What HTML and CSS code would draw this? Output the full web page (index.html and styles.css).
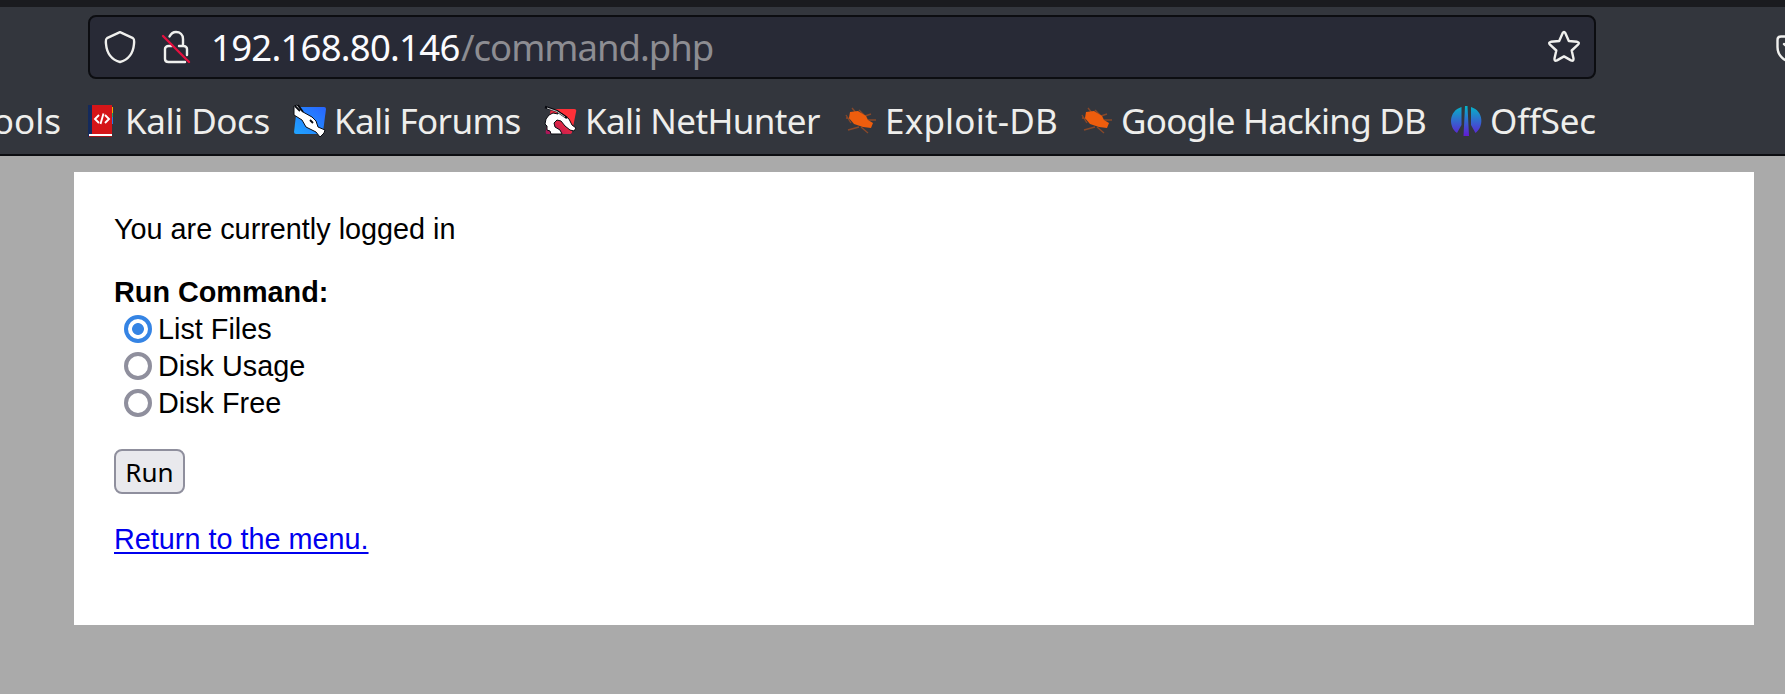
FILE: index.html
```html
<!DOCTYPE html>
<html lang="en">
<head>
<meta charset="utf-8">
<title>Command</title>
<link rel="stylesheet" href="styles.css">
</head>
<body>
<header class="browser">
  <div class="navbar">
    <div class="urlbar">
      <svg class="icon shield" viewBox="0 0 32 34"><path d="M16 2.2 29 8.2C30.5 9 30.3 11 30 14C29.3 22 25 29.500 16 32C7 29.500 2.700 22 2 14C1.700 11 1.500 9 3 8.200Z"/></svg>
      <svg class="icon lock" viewBox="0 0 32 34"><path d="M9.500 6.500C11 3.500 13 2 16 2C20 2 23 4.500 23 9V16M19 16H23.500C25.500 16 27 17.500 27 19V25M12 16H8.500C6.500 16 5 17.500 5 19V29C5 31 6.500 32 8.500 32H25"/><path class="slash" d="M3 6 29 32"/></svg>
      <span class="host">192.168.80.146</span><span class="path">/command.php</span>
      <svg class="icon star" viewBox="0 0 34 34"><path d="M15.600 3.200Q17 .8 18.400 3.200L21.800 11L30.200 11.800Q33 12.400 31 14.600L24.700 20.500L26.500 28.500Q26.800 31.500 24 30.400L17 26.400L10 30.400Q7.200 31.500 7.500 28.500L9.300 20.500L3 14.600Q1 12.400 3.800 11.800L12.200 11Z"/></svg>
    </div>
    <svg class="icon pocket" viewBox="0 0 34 30"><path d="M5 1.500H29Q32.500 1.500 32.500 5V12C32.500 21 25 27 17 27S1.500 21 1.500 12V5Q1.500 1.500 5 1.500ZM8 9 17 17 26 9"/></svg>
  </div>
  <nav class="bookmarks">
    <span class="tail">ools</span>
    <a class="mark docs"><svg viewBox="0 0 32 32"><path fill="#f5a800" d="M22 2h3v7h-3z"/><path fill="#20a465" d="M22 8h3v5h-3z"/><path fill="#2b78e4" d="M22 12h3v7h-3z"/><path fill="#142a5c" d="M0 0h5v32H0z"/><path fill="#d51518" d="M4 0h20v29H4z"/><path fill="#fff" d="M1 29h23v2H1z"/><path fill="#a51118" d="M1 31h23v1H1z"/><path fill="none" stroke="#fff" stroke-width="1.900" d="M11 10 7 14l4 4M17 10l4 4-4 4M15.500 8.500 12.500 19"/></svg><span>Kali Docs</span></a>
    <a class="mark forums"><svg viewBox="0 0 32 32"><defs><linearGradient id="blue" x1="0" y1="1" x2="1" y2="0"><stop stop-color="#20a5ff"/><stop offset="1" stop-color="#2864ff"/></linearGradient></defs><path fill="url(#blue)" d="M3 2H30Q32 2 32 4L29 27Q28 29 26 29H2Q0 29 0 27Z"/><path fill="#fff" stroke="#080a10" stroke-width="1" d="M0 1 3 0 9 7 18 12 22 16 24 22 31 25 30 28 26 32 22 27 12 22 8 15 0 10Z"/><path fill="none" stroke="#080a10" stroke-width="1.800" d="M1 1 6 6M4 0 9 7M16 15l3 3"/></svg><span>Kali Forums</span></a>
    <a class="mark hunter"><svg viewBox="0 0 32 32"><defs><linearGradient id="red" x1="0" y1="1" x2="1" y2="0"><stop stop-color="#a5145c"/><stop offset=".7" stop-color="#ff3038"/></linearGradient></defs><path fill="url(#red)" d="M6 4H29Q32 4 31 7L27 27Q27 29 24 29H2Q0 29 1 25Z"/><path fill="#fff" stroke="#080a10" stroke-width="1" d="M6 29 5 26 2 25 2 21 0 19 1 14 4 10 8 8 13 9 12 6 19 10 24 14 27 20 31 23 29 26 25 25 20 21 16 16 12 15 9 18 10 22 15 25 17 29Z"/><path fill="none" stroke="#080a10" stroke-width="2.400" d="M0 2 12 6 22 13"/><path fill="none" stroke="#ddd" stroke-width=".9" d="M2 3 12 6.500 20 12"/></svg><span>Kali NetHunter</span></a>
    <a class="mark exploit"><svg viewBox="0 0 32 32"><path class="legs" d="M1 13 9 14M7 3l5 6M14 5l7 7M20 11l6-2M23 15h8M3 25l11-3M16 22l7 6M1 10l5 8"/><path class="bug" d="M5 7 13 6 21 11 23 15 28 18 26 23 18 22 9 19 4 13Z"/></svg><span>Exploit-DB</span></a>
    <a class="mark google"><svg viewBox="0 0 32 32"><path class="legs" d="M1 13 9 14M7 3l5 6M14 5l7 7M20 11l6-2M23 15h8M3 25l11-3M16 22l7 6M1 10l5 8"/><path class="bug" d="M5 7 13 6 21 11 23 15 28 18 26 23 18 22 9 19 4 13Z"/></svg><span>Google Hacking DB</span></a>
    <a class="mark offsec"><svg viewBox="0 0 32 32"><defs><linearGradient id="cyan" x1="0" y1="0" x2="0" y2="32" gradientUnits="userSpaceOnUse"><stop stop-color="#00bcc8"/><stop offset="1" stop-color="#6515d5"/></linearGradient></defs><path fill="url(#cyan)" d="M10.500 2V20L6 28C-2.500 22-2.500 6 10.500 2ZM14 1h2.500l1.500 30h-5.500ZM20 2C33 6 33 22 24.500 28L20 20Z"/></svg><span>OffSec</span></a>
  </nav>
</header>
<main class="card">
  <p class="status">You are currently logged in</p>
  <form class="command">
    <strong>Run Command:</strong>
    <label class="option"><input type="radio" name="cmd" checked>List Files</label>
    <label class="option"><input type="radio" name="cmd">Disk Usage</label>
    <label class="option"><input type="radio" name="cmd">Disk Free</label>
    <button class="run" type="button">Run</button>
  </form>
  <a class="return" href="#">Return to the menu.</a>
</main>
</body>
</html>
```
FILE: styles.css
```css
* { box-sizing: border-box; }
body { margin: 0; height: 694px; overflow: hidden; background: #aaa; font: 28.8px/37px "Liberation Sans", sans-serif; color: #000; }
.browser { height: 156px; overflow: hidden; background: #33363d; border-top: 7px solid #1a1b1f; border-bottom: 2px solid #0c0d11; font-family: "Noto Sans", sans-serif; }
.navbar { display: flex; padding: 8px 0 0 88px; width: 1820px; }
.urlbar { display: flex; align-items: center; width: 1508px; height: 64px; padding: 0 13px 0 14px; border: 2px solid #0c0d11; border-radius: 8px; background: #282a36; font-size: 36.5px; }
.icon { flex: none; fill: none; stroke: #f0f0ee; stroke-width: 2.4; stroke-linecap: round; stroke-linejoin: round; }
.shield { width: 32px; height: 34px; }
.lock { width: 32px; height: 34px; margin: 0 19px 0 24px; }
.slash { stroke: #e5103f; }
.host { width: 250px; padding-top: 1px; color: #fbfbfe; letter-spacing: -.75px; white-space: nowrap; }
.path { padding-top: 1px; color: #8d8d92; letter-spacing: -1px; white-space: nowrap; }
.star { width: 34px; height: 34px; margin-left: auto; }
.pocket { width: 34px; height: 30px; margin: 20px 0 0 180px; }
.bookmarks { display: flex; align-items: center; height: 64px; margin-top: 9px; font-size: 35px; color: #eeeeec; white-space: nowrap; }
.tail { display: flex; justify-content: flex-end; flex: none; width: 88px; padding-right: 27px; }
.mark { display: flex; align-items: center; flex: none; }
.mark svg { flex: none; width: 32px; height: 32px; margin: 2px 8px 0 0; overflow: visible; }
.mark span { width: 0; }
.docs { width: 206px; }
.docs svg { margin-right: 5px; }
.docs span { letter-spacing: -.45px; }
.forums { width: 251px; }
.forums span { letter-spacing: -.6px; }
.hunter { width: 300px; }
.hunter span { letter-spacing: -.62px; }
.exploit { width: 236px; }
.exploit span { letter-spacing: .2px; }
.google { width: 370px; }
.google span { letter-spacing: -.75px; }
.offsec svg { margin-right: 7px; }
.offsec span { letter-spacing: -.2px; }
.legs { fill: none; stroke: #87482a; stroke-width: 1.4; }
.bug { fill: #ee5d0d; }
.card { width: 1680px; height: 453px; margin: 16px 0 0 74px; padding: 39px 40px; background: #fff; }
.status { margin: 0 0 26px; }
.command { display: flex; flex-direction: column; align-items: flex-start; }
.option { display: flex; align-items: center; }
.option input { appearance: none; width: 28px; height: 28px; margin: 0 6px 1px 10px; border: 4px solid #8f8f9d; border-radius: 50%; background: #fff; }
.option input:checked { border-color: #3584e4; background: radial-gradient(circle, #3584e4 0 5.500px, #fff 6.300px); }
.run { width: 71px; height: 45px; margin: 27px 0; padding: 1px 0 0; border: 2px solid #8f8f9d; border-radius: 8px; background: #e9e9ed; color: #000; font: 26px/36px "Noto Sans", sans-serif; }
.return { color: #00e; text-decoration-thickness: 2px; text-underline-offset: 3px; }
```
